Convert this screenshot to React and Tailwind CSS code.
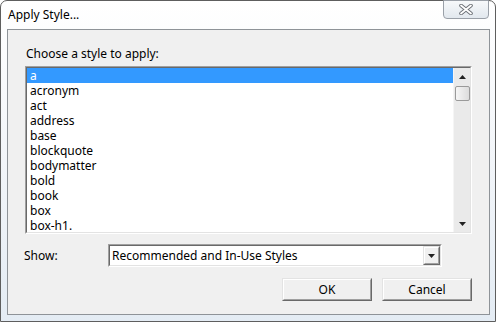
import React from "react";

const items = ["a","acronym","act","address","base","blockquote","bodymatter","bold","book","box","box-h1."];

function Tri({ up }) {
  return (
    <svg width="7" height="4" viewBox="0 0 7 4">
      {up ? <path d="M0 4 L3.5 0 L7 4 Z" fill="#222" /> : <path d="M0 0 L7 0 L3.5 4 Z" fill="#222" />}
    </svg>
  );
}

function Btn({ children }) {
  return (
    <div className="w-[90px] h-[23px] border border-t-[#e3e3e3] border-l-[#e3e3e3] border-r-[#696969] border-b-[#696969]">
      <div className="w-full h-full border border-t-white border-l-white border-r-[#a0a0a0] border-b-[#a0a0a0] bg-[#f0f0f0] flex items-center justify-center text-[12px] leading-[15px] text-black">
        {children}
      </div>
    </div>
  );
}

export default function App() {
  return (
    <div className="w-[496px] h-[322px] bg-white" style={{}}>
      <div className="w-full h-full rounded-t-[7px] border border-[#5e5e5e] bg-gradient-to-b from-white via-[#f2f5f9] to-[#e4ecf4] flex flex-col font-['Noto_Sans',sans-serif] text-black">
        <div className="h-[28px] flex items-start justify-between pl-[7px] pr-[6px]">
          <span className="mt-[6px] text-[12px] leading-[16px]">Apply Style...</span>
          <div className="w-[46px] h-[19px] -mt-px rounded-b-[4px] border border-[#9aa0a8] bg-gradient-to-b from-[#f7f9fb] to-[#e2e8ee] flex items-center justify-center">
            <svg width="14" height="11" viewBox="0 0 14 11">
              <path d="M2 1.5 L12 9.5 M12 1.5 L2 9.5" stroke="#6b6f75" strokeWidth="3.6" strokeLinecap="round" />
              <path d="M2 1.5 L12 9.5 M12 1.5 L2 9.5" stroke="#ffffff" strokeWidth="1.8" strokeLinecap="round" />
            </svg>
          </div>
        </div>
        <div className="ml-[6px] w-[483px] h-[286px] border border-[#8e9398] bg-[#f0f0f0] flex flex-col">
          <div className="mt-[16px] ml-[18px] h-[15px] text-[12px] leading-[15px]">Choose a style to apply:</div>
          <div className="mt-[5px] ml-[17px] w-[447px] h-[168px] border border-t-[#a0a0a0] border-l-[#a0a0a0] border-r-white border-b-white">
            <div className="w-full h-full border border-t-[#696969] border-l-[#696969] border-r-[#e3e3e3] border-b-[#e3e3e3] bg-white flex">
              <div className="flex-1 flex flex-col overflow-hidden">
                {items.map((it, i) => (
                  <div key={it} className={"h-[15px] shrink-0 pl-[3px] text-[12px] leading-[15px] " + (i === 0 ? "bg-[#3399ff] text-white" : "text-black")}>{it}</div>
                ))}
              </div>
              <div className="w-[17px] h-full bg-[#eaeaea] border-l border-[#f5f5f5] flex flex-col items-center">
                <div className="h-[17px] flex items-center justify-center"><Tri up /></div>
                <div className="mt-px w-[15px] h-[15px] rounded-[2px] border border-[#9a9a9a] bg-gradient-to-r from-[#f6f6f6] to-[#dcdcdc]" />
                <div className="flex-1" />
                <div className="h-[17px] flex items-center justify-center"><Tri /></div>
              </div>
            </div>
          </div>
          <div className="mt-[10px] flex items-center">
            <div className="ml-[16px] w-[84px] text-[12px] leading-[15px]">Show:</div>
            <div className="w-[334px] h-[23px] border border-t-[#a0a0a0] border-l-[#a0a0a0] border-r-white border-b-white">
              <div className="w-full h-full border border-t-[#696969] border-l-[#696969] border-r-[#e3e3e3] border-b-[#e3e3e3] bg-white flex items-center">
                <span className="flex-1 pl-[2px] text-[12px] leading-[15px]">Recommended and In-Use Styles</span>
                <div className="w-[17px] h-[19px] border border-t-[#e3e3e3] border-l-[#e3e3e3] border-r-[#696969] border-b-[#696969]">
                  <div className="w-full h-full border border-t-white border-l-white border-r-[#a0a0a0] border-b-[#a0a0a0] bg-[#f0f0f0] flex items-center justify-center">
                    <Tri />
                  </div>
                </div>
              </div>
            </div>
          </div>
          <div className="mt-[11px] flex justify-end gap-[10px] pr-[17px]">
            <Btn>OK</Btn>
            <Btn>Cancel</Btn>
          </div>
        </div>
      </div>
    </div>
  );
}
